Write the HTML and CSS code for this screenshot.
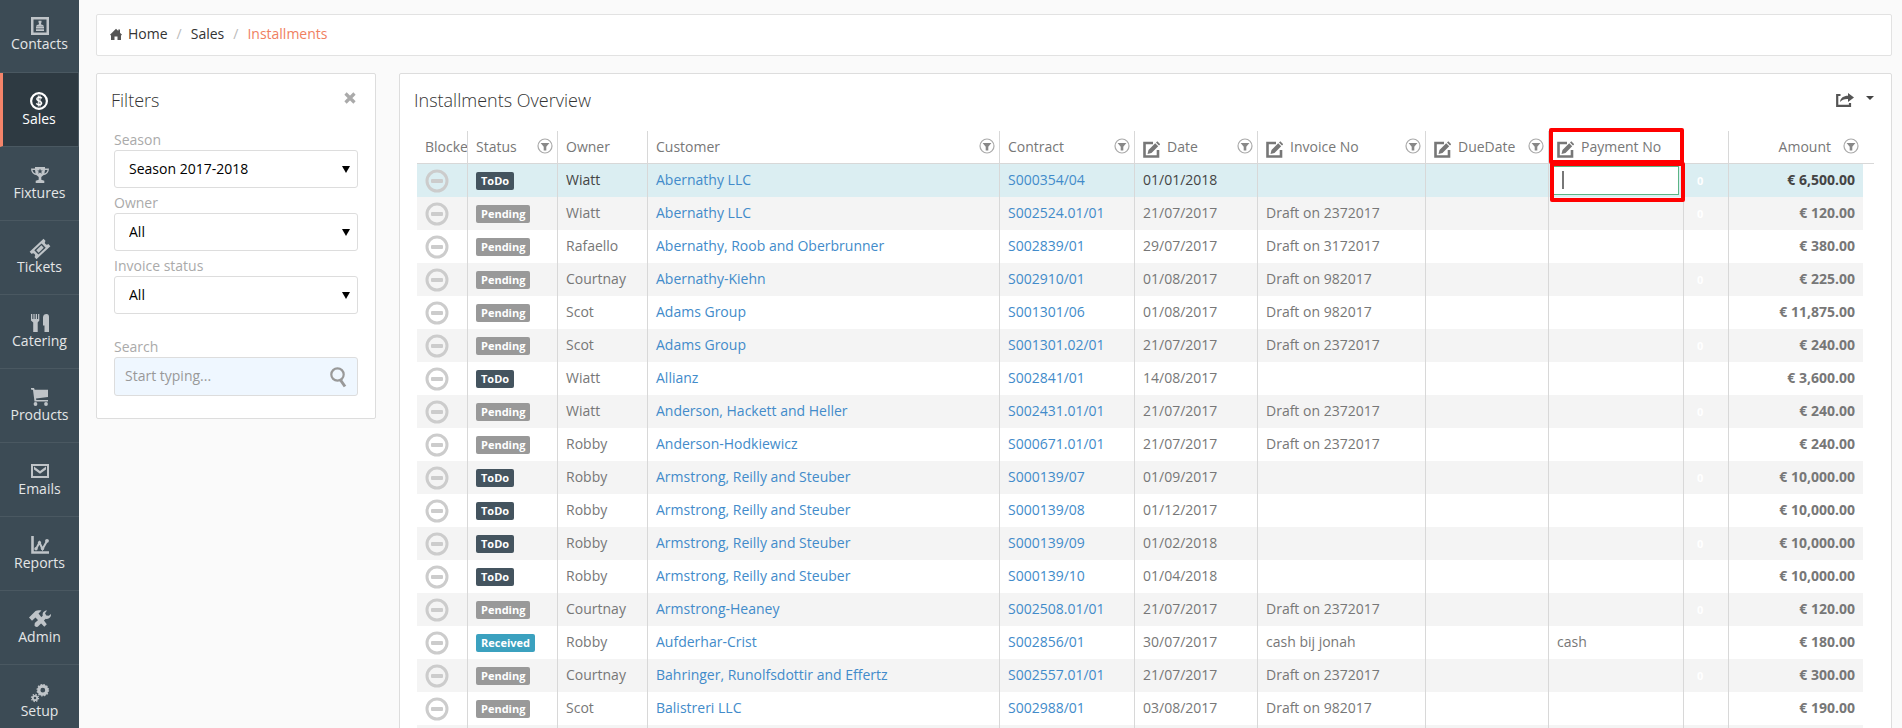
FILE: index.html
```
<!DOCTYPE html>
<html lang="en">
<head>
<meta charset="utf-8">
<title>Installments</title>
<link rel="stylesheet" href="styles.css">
</head>
<body>
<svg class="defs" aria-hidden="true">
  <symbol id="minus" viewBox="0 0 24 24"><circle cx="12" cy="12" r="10" fill="none" stroke="#ccc" stroke-width="3"/><rect x="6" y="10" width="12" height="4" rx="1" fill="#ccc"/></symbol>
  <symbol id="filter" viewBox="0 0 16 16"><circle cx="8" cy="8" r="7" fill="none" stroke="#aaa" stroke-width="1.2"/><path d="M3.6 5h8.800L9.300 8.700V12.500H6.700V8.700Z" fill="#888"/></symbol>
  <symbol id="edit" viewBox="0 0 17 17"><path d="M10 2H1.500V15.500H15V9" fill="none" stroke="#777" stroke-width="2.600"/><path d="M4.500 13l1-4 6.700-6.700 3 3L8.500 12Z M13 1.500L14.300.3l3 2.900L16 4.500Z" fill="#777"/></symbol>
</svg>
<div class="app">
  <nav class="sidebar">
    <a class="nav-item first" href="#"><svg viewBox="0 0 18 18"><path fill-rule="evenodd" fill="currentColor" d="M0 0h18v18H0Z M2.500 2.500v13h13v-13Z"/><path fill="currentColor" d="M7.500 3.800h3v1.200l-.6 2.300 2.600.9v1H5.500v-1l2.600-.9-.6-2.300Z M5 9.500h8v2H5Z M5 12.200h8V14H5Z"/></svg><span>Contacts</span></a>
    <a class="nav-item active" href="#"><svg viewBox="0 0 18 18" fill="none" stroke="currentColor"><circle cx="9" cy="9" r="7.900" stroke-width="2.200"/><path stroke-width="1.500" d="M11.800 6.200C10.500 4.900 6.800 5 6.800 7.100S11.600 8.600 11.600 11 7.600 12.900 6.200 11.400"/><path d="M8.300 3.500v11M10 3.500v11"/></svg><span>Sales</span></a>
    <a class="nav-item" href="#"><svg viewBox="0 0 18 18"><path fill="currentColor" fill-rule="evenodd" d="M4 1h10v1.500h4C18 6 16 8.500 12.300 9.300L10.300 11v2.800l3 1V17H4.700v-2.200l3-1V11l-2-1.700C2 8.500 0 6 0 2.500h4Z M1.500 4C1.900 5.800 2.900 7 4.600 7.500L4 4Z M16.500 4H14l-.6 3.500C15.100 7 16.100 5.800 16.500 4Z M9 2.500l-.8 1.900H6.200l1.600 1.300-.6 2L9 6.500l1.800 1.200-.6-2 1.600-1.300h-2Z"/></svg><span>Fixtures</span></a>
    <a class="nav-item" href="#"><svg viewBox="0 0 18 18"><g transform="rotate(-43 9 9)"><path fill="currentColor" fill-rule="evenodd" d="M-.5 4h19v3a2 2 0 0 0 0 4v3h-19v-3a2 2 0 0 0 0-4Z M4 6v6h10V6Z"/><path fill="currentColor" d="M5.500 7.300h7v3.400h-7Z"/></g></svg><span>Tickets</span></a>
    <a class="nav-item" href="#"><svg viewBox="0 0 18 18"><path fill="currentColor" d="M0 0h1.300v5h1.100V0h1.200v5h1.100V0H6v5h1.100V0h1.200v6.500L6.700 8.500V18H2.200V8.500L0 6.500Z M13.500 18v-6.500H12V3.500C12 1 13.500 0 15.500 0 17.300 0 18 1.200 18 3v15Z"/></svg><span>Catering</span></a>
    <a class="nav-item" href="#"><svg viewBox="0 0 18 18"><path fill="currentColor" d="M0 0h3l.7 1.800H17v7.300L5 10.600l.3 1.400H17v1.600H3.500L2 2 0 1.500Z"/><circle cx="4.500" cy="16" r="1.900" fill="currentColor"/><circle cx="15" cy="16" r="1.900" fill="currentColor"/></svg><span>Products</span></a>
    <a class="nav-item" href="#"><svg viewBox="0 0 18 18"><path fill="currentColor" fill-rule="evenodd" d="M0 2h18v14H0Z M2 4v10h14V4Z"/><path fill="currentColor" d="M3 4.500l6 4.400 6-4.400v2.900l-6 4.400-6-4.400Z"/></svg><span>Emails</span></a>
    <a class="nav-item" href="#"><svg viewBox="0 0 18 18" fill="none" stroke="currentColor"><path stroke-width="2.600" d="M1.500 0v16.500H18"/><path stroke-width="2" d="M5 13l3.500-6.500L11.500 13 16 5"/><g fill="currentColor" stroke="none"><circle cx="5" cy="12.800" r="1.700"/><circle cx="8.500" cy="6.800" r="1.700"/><circle cx="11.500" cy="12.500" r="1.700"/><circle cx="16" cy="4.800" r="1.900"/></g></svg><span>Reports</span></a>
    <a class="nav-item" href="#"><svg class="wide" viewBox="0 0 22 18"><path fill="currentColor" d="M0 7.500L6.500 1C8 0 10 0 12.500.4L9.500 3.500l8.300 10.700-2.500 2.600L6.500 7.500 3 10.800Z"/><path fill="currentColor" d="M5.800 13l8-7.300C13 3 15 .5 18 .5L16 3.300l1.300 2.200 2.500.2L22 4c.3 3.500-2.500 5.500-5.300 4.700L9.500 16c-1 1.500-3.500 1-4-.5Z"/></svg><span>Admin</span></a>
    <a class="nav-item" href="#"><svg viewBox="0 0 18 18" fill="none" stroke="currentColor"><circle cx="11.800" cy="6.200" r="4" stroke-width="3.200"/><circle cx="11.800" cy="6.200" r="5.700" stroke-width="1.300" stroke-dasharray="1.500 1.480"/><circle cx="4" cy="14" r="2.200" stroke-width="1.800"/><circle cx="4" cy="14" r="3.500" stroke-width="1.300" stroke-dasharray="1.400 1.340"/></svg><span>Setup</span></a>
  </nav>

  <div class="page">
    <nav class="breadcrumb">
      <a href="#"><svg class="home" viewBox="0 0 12 12"><path fill="#555" d="M6 .8L8.300 3V1.500H10V4.700L12 6.800 11 7.600V12H7.500V8.500H4.500V12H1V7.600L0 6.800Z"/></svg>Home</a>
      <span class="sep">/</span>
      <a href="#">Sales</a>
      <span class="sep">/</span>
      <span class="current">Installments</span>
    </nav>

    <div class="columns">
      <aside class="panel filters">
        <header class="panel-head">
          <h2>Filters</h2>
          <button class="close" aria-label="Close filters"><svg viewBox="0 0 12 12"><path d="M1.500 1.500l9 9M10.500 1.500l-9 9" stroke="#aaa" stroke-width="3.200"/></svg></button>
        </header>
        <form class="fields">
          <label for="season">Season</label>
          <div class="select"><select id="season"><option>Season 2017-2018</option></select></div>
          <label for="owner">Owner</label>
          <div class="select"><select id="owner"><option>All</option></select></div>
          <label for="invoice">Invoice status</label>
          <div class="select"><select id="invoice"><option>All</option></select></div>
          <label for="search" class="search-label">Search</label>
          <div class="search"><input id="search" type="text" placeholder="Start typing..."><svg viewBox="0 0 17 21"><circle cx="7.500" cy="7.500" r="6.200" fill="none" stroke="#999" stroke-width="2.200"/><path d="M10.500 13l4.500 6.500" stroke="#999" stroke-width="3"/></svg></div>
        </form>
      </aside>

      <main class="panel overview">
        <header class="panel-head">
          <h2>Installments Overview</h2>
          <button class="export" aria-label="Export"><svg class="share" viewBox="0 0 18 14"><path fill="none" stroke="#555" stroke-width="2.200" d="M4.500 2H1.200V12.800H14V10"/><path fill="#555" d="M4 9C4.500 5 7.500 2.800 12 2.800V0l6 4.500-6 4.500V6C8.500 5.800 6 6.800 4 9Z"/></svg><svg class="caret" viewBox="0 0 8 4"><path fill="#444" d="M0 0h8L4 4Z"/></svg></button>
        </header>
        <table class="grid">
          <colgroup><col class="c-block"><col class="c-status"><col class="c-owner"><col><col class="c-contract"><col class="c-date"><col class="c-invoice"><col class="c-due"><col class="c-payment"><col class="c-count"><col class="c-amount"><col class="c-gutter"></colgroup>
          <thead>
            <tr>
              <th>Blocke</th>
              <th><div class="th">Status<svg class="filter"><use href="#filter"/></svg></div></th>
              <th>Owner</th>
              <th><div class="th">Customer<svg class="filter"><use href="#filter"/></svg></div></th>
              <th><div class="th">Contract<svg class="filter"><use href="#filter"/></svg></div></th>
              <th><div class="th"><svg class="edit"><use href="#edit"/></svg>Date<svg class="filter"><use href="#filter"/></svg></div></th>
              <th><div class="th"><svg class="edit"><use href="#edit"/></svg>Invoice No<svg class="filter"><use href="#filter"/></svg></div></th>
              <th><div class="th"><svg class="edit"><use href="#edit"/></svg>DueDate<svg class="filter"><use href="#filter"/></svg></div></th>
              <th class="marked"><div class="th"><svg class="edit"><use href="#edit"/></svg>Payment No</div></th>
              <th></th>
              <th><div class="th end">Amount<svg class="filter"><use href="#filter"/></svg></div></th>
              <th></th>
            </tr>
          </thead>
          <tbody id="rows"></tbody>
        </table>
      </main>
    </div>
  </div>
</div>
<script src="app.js"></script>
</body>
</html>
```
FILE: styles.css
```
* { box-sizing: border-box; }
body {
  margin: 0;
  height: 100vh;
  overflow: hidden;
  background: #fafafa;
  color: #777;
  font: 14px/20px "Open Sans", sans-serif;
}
a { text-decoration: none; }
button { border: 0; padding: 0; background: none; cursor: pointer; }
.defs { position: absolute; width: 0; height: 0; }
.app { display: flex; height: 100vh; overflow: hidden; }

.sidebar { flex: 0 0 79px; height: 100vh; overflow: hidden; background: #3c4b55; }
.nav-item {
  display: flex;
  flex-direction: column;
  align-items: center;
  height: 74px;
  padding-top: 19px;
  border-bottom: 1px solid #4a5861;
  color: #e4e6e7;
  line-height: 18px;
}
.nav-item.first { height: 73px; padding-top: 17px; }
.nav-item svg { width: 18px; height: 18px; color: #bfc4c8; overflow: visible; }
.nav-item svg.wide { width: 22px; }
.nav-item.active {
  padding-right: 3px;
  border-left: 3px solid #f4846a;
  border-right: 1px solid #4a5861;
  background: #2e3a42;
  color: #fff;
}
.nav-item.active svg { color: #fff; }

.page { flex: 1; min-width: 0; padding: 14px 10px 0 17px; }
.breadcrumb {
  display: flex;
  align-items: center;
  gap: 9px;
  height: 42px;
  padding: 0 13px 2px;
  border: 1px solid #e2e2e2;
  border-radius: 2px;
  background: #fff;
}
.breadcrumb a { color: #333; }
.home { width: 12px; height: 12px; margin-right: 6px; vertical-align: -1px; }
.sep { color: #bbb; }
.current { color: #f0805f; }

.columns { display: flex; gap: 23px; margin-top: 17px; }
.panel { border: 1px solid #ddd; border-radius: 2px; background: #fff; }
.filters { flex: 0 0 280px; height: 346px; }
.overview { flex: 1; min-width: 0; }
.panel-head { display: flex; justify-content: space-between; padding: 13px 19px 1px 14px; }
.panel-head h2 { margin: 0; color: #333; font-size: 18px; font-weight: 300; line-height: 26px; }
.close { align-self: flex-start; margin-top: 5px; }
.close svg { display: block; width: 12px; height: 12px; }
.fields { display: flex; flex-direction: column; padding: 16px 17px 0; }
.fields label { height: 20px; color: #aaa; line-height: 20px; }
.select { position: relative; height: 38px; margin-bottom: 5px; }
.select::after {
  content: "";
  position: absolute;
  top: 16px;
  right: 8px;
  border: 4px solid transparent;
  border-top: 7px solid #000;
  border-bottom: 0;
  pointer-events: none;
}
.select select {
  width: 100%;
  height: 38px;
  padding: 0 14px;
  border: 1px solid #ddd;
  border-radius: 3px;
  background: #fff;
  color: #000;
  font: inherit;
  appearance: none;
}
.fields .search-label { margin-top: 18px; }
.search { position: relative; }
.search input {
  display: block;
  width: 100%;
  height: 39px;
  padding: 0 40px 2px 10px;
  border: 1px solid #ddd;
  border-radius: 3px;
  background: #eff7ff;
  color: #555;
  font: inherit;
}
.search input::placeholder { color: #999; }
.search svg { position: absolute; top: 10px; right: 11px; width: 17px; height: 21px; }
.export { display: flex; align-items: flex-start; gap: 12px; margin-top: 6px; margin-right: -2px; }
.share { width: 18px; height: 14px; }
.caret { width: 8px; height: 4px; margin-top: 3px; }

.grid { width: calc(100% - 34px); margin: 17px 17px 0; border-spacing: 0; table-layout: fixed; }
.c-block { width: 51px; }
.c-status, .c-owner { width: 90px; }
.c-contract, .c-payment { width: 135px; }
.c-date, .c-due { width: 123px; }
.c-invoice { width: 168px; }
.c-count { width: 45px; }
.c-amount { width: 134px; }
.c-gutter { width: 11px; }
.grid th, .grid td {
  height: 33px;
  padding: 0 8px;
  border-right: 1px solid #d8d8d8;
  overflow: hidden;
  text-align: left;
  white-space: nowrap;
}
.grid td { padding-bottom: 2px; }
.grid th { border-bottom: 1px solid #d8d8d8; font-weight: 400; }
.grid th:first-child, .grid th:nth-last-child(-n+2), .grid td:nth-last-child(-n+2) { padding-right: 0; }
.grid th:nth-last-child(-n+2), .grid td:nth-last-child(-n+2) { border-right: 0; }
.th { display: flex; align-items: center; height: 32px; }
.grid th:not(:nth-last-child(2)) { padding-right: 4px; }
.grid th:first-child { padding-right: 0; }
.th .filter { width: 16px; height: 16px; margin-left: auto; margin-bottom: 2px; }
.th.end { justify-content: flex-end; padding-right: 4px; }
.th.end .filter { margin-left: 12px; }
.th .edit { width: 17px; height: 17px; margin: 5px 7px 0 0; overflow: visible; }
.grid tr:nth-child(even) td { background: #f4f4f4; }
.grid tbody tr.selected td { background: #dbeef2; color: #444; }
.grid tbody tr td:last-child { background: none; }
.grid td a { color: #428bca; }
.grid td.amount { padding-right: 8px; font-weight: 700; text-align: right; }
.grid tbody tr td.count { padding: 0 0 0 13px; color: #fff; font-size: 11px; font-weight: 700; }
.grid td .minus { display: block; width: 24px; height: 24px; margin-top: 2px; }
.tag {
  display: inline-block;
  height: 18px;
  padding: 0 5px;
  border-radius: 2px;
  background: #999;
  color: #fff;
  font-size: 11px;
  font-weight: 700;
  line-height: 18px;
  vertical-align: middle;
}
.tag.todo { background: #44545f; }
.tag.received { background: #3ba1bf; }

.grid .marked { position: relative; overflow: visible; }
.marked::after {
  content: "";
  position: absolute;
  inset: -3px -1px -1px 0;
  border: 4px solid #f00;
  border-radius: 2px;
  pointer-events: none;
}
.grid td.marked { padding: 0 4px; }
td.marked::after { inset: -2px -2px -5px 1px; }
.marked input {
  display: block;
  width: 100%;
  height: 29px;
  padding: 0 8px;
  border: 1px solid #5cb585;
  outline: 0;
  background: #fff;
  font: inherit;
}
.cursor { position: absolute; top: 7px; left: 13px; width: 2px; height: 18px; background: #777; }
```
FILE: app.js
```
const rows = [
  ["ToDo", "Wiatt", "Abernathy LLC", "S000354/04", "01/01/2018", "", "", "6,500.00"],
  ["Pending", "Wiatt", "Abernathy LLC", "S002524.01/01", "21/07/2017", "Draft on 2372017", "", "120.00"],
  ["Pending", "Rafaello", "Abernathy, Roob and Oberbrunner", "S002839/01", "29/07/2017", "Draft on 3172017", "", "380.00"],
  ["Pending", "Courtnay", "Abernathy-Kiehn", "S002910/01", "01/08/2017", "Draft on 982017", "", "225.00"],
  ["Pending", "Scot", "Adams Group", "S001301/06", "01/08/2017", "Draft on 982017", "", "11,875.00"],
  ["Pending", "Scot", "Adams Group", "S001301.02/01", "21/07/2017", "Draft on 2372017", "", "240.00"],
  ["ToDo", "Wiatt", "Allianz", "S002841/01", "14/08/2017", "", "", "3,600.00"],
  ["Pending", "Wiatt", "Anderson, Hackett and Heller", "S002431.01/01", "21/07/2017", "Draft on 2372017", "", "240.00"],
  ["Pending", "Robby", "Anderson-Hodkiewicz", "S000671.01/01", "21/07/2017", "Draft on 2372017", "", "240.00"],
  ["ToDo", "Robby", "Armstrong, Reilly and Steuber", "S000139/07", "01/09/2017", "", "", "10,000.00"],
  ["ToDo", "Robby", "Armstrong, Reilly and Steuber", "S000139/08", "01/12/2017", "", "", "10,000.00"],
  ["ToDo", "Robby", "Armstrong, Reilly and Steuber", "S000139/09", "01/02/2018", "", "", "10,000.00"],
  ["ToDo", "Robby", "Armstrong, Reilly and Steuber", "S000139/10", "01/04/2018", "", "", "10,000.00"],
  ["Pending", "Courtnay", "Armstrong-Heaney", "S002508.01/01", "21/07/2017", "Draft on 2372017", "", "120.00"],
  ["Received", "Robby", "Aufderhar-Crist", "S002856/01", "30/07/2017", "cash bij jonah", "cash", "180.00"],
  ["Pending", "Courtnay", "Bahringer, Runolfsdottir and Effertz", "S002557.01/01", "21/07/2017", "Draft on 2372017", "", "300.00"],
  ["Pending", "Scot", "Balistreri LLC", "S002988/01", "03/08/2017", "Draft on 982017", "", "190.00"]
];

const link = (text) => `<a href="#">${text}</a>`;
const editor = '<input type="text" aria-label="Payment No"><span class="cursor"></span>';

const html = rows.map(([status, owner, customer, contract, date, invoice, payment, amount], i) => `
  <tr class="${i === 0 ? "selected" : ""}">
    <td><svg class="minus"><use href="#minus"/></svg></td>
    <td><span class="tag ${status.toLowerCase()}">${status}</span></td>
    <td>${owner}</td>
    <td>${link(customer)}</td>
    <td>${link(contract)}</td>
    <td>${date}</td>
    <td>${invoice}</td>
    <td></td>
    <td class="${i === 0 ? "marked" : ""}">${i === 0 ? editor : payment}</td>
    <td class="count">${i === 0 || i % 2 ? "0" : ""}</td>
    <td class="amount">€ ${amount}</td>
    <td></td>
  </tr>`).join("");

const emptyRow = `<tr>${"<td></td>".repeat(12)}</tr>`;
document.getElementById("rows").innerHTML = html + emptyRow;
```
